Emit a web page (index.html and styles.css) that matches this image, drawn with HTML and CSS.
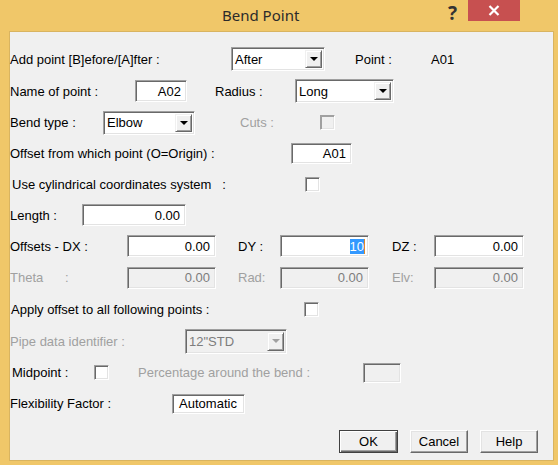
FILE: index.html
```html
<!DOCTYPE html>
<html>
<head>
<meta charset="utf-8">
<link rel="stylesheet" href="styles.css">
</head>
<body>
<div class="window">
  <div class="titlebar">
    <div class="title">Bend Point</div>
    <div class="help-q">?</div>
    <div class="close">
      <svg width="12" height="11" viewBox="0 0 12 11"><path d="M1.5 1 L10.5 10 M10.5 1 L1.5 10" stroke="#fff" stroke-width="2.2" fill="none"/></svg>
    </div>
  </div>
  <div class="client">
    <div class="row r1">
      <span class="lbl w221">Add point [B]efore/[A]fter :</span>
      <div class="combo w94"><span class="ctext">After</span><span class="dbtn"><i class="tri"></i></span></div>
      <span class="lbl ml30 w76">Point :</span>
      <span class="lbl">A01</span>
    </div>
    <div class="row r2">
      <span class="lbl w125">Name of point :</span>
      <div class="edit w52 h22 right">A02</div>
      <span class="lbl ml28 w80">Radius :</span>
      <div class="combo w99"><span class="ctext">Long</span><span class="dbtn"><i class="tri"></i></span></div>
    </div>
    <div class="row r3">
      <span class="lbl w93">Bend type :</span>
      <div class="combo w92"><span class="ctext">Elbow</span><span class="dbtn"><i class="tri"></i></span></div>
      <span class="lbl dis ml45 w80">Cuts :</span>
      <div class="check disabled"></div>
    </div>
    <div class="row r4">
      <span class="lbl w281">Offset from which point (O=Origin) :</span>
      <div class="edit w61 h21 right">A01</div>
    </div>
    <div class="row r5">
      <span class="lbl w295 pl2">Use cylindrical coordinates system &nbsp;&nbsp;:</span>
      <div class="check"></div>
    </div>
    <div class="row r6">
      <span class="lbl w72">Length :</span>
      <div class="edit w104 right">0.00</div>
    </div>
    <div class="row r7">
      <span class="lbl w117">Offsets - DX :</span>
      <div class="edit w89 right">0.00</div>
      <span class="lbl ml22 w42">DY :</span>
      <div class="edit w89 right"><span class="sel">10</span><span class="caret"></span></div>
      <span class="lbl ml23 w42">DZ :</span>
      <div class="edit w90 right">0.00</div>
    </div>
    <div class="row r8">
      <span class="lbl dis w117">Theta &nbsp;&nbsp;&nbsp;&nbsp;&nbsp;:</span>
      <div class="edit disabled w89 right">0.00</div>
      <span class="lbl dis ml22 w42">Rad:</span>
      <div class="edit disabled w89 right">0.00</div>
      <span class="lbl dis ml23 w42">Elv:</span>
      <div class="edit disabled w90 right">0.00</div>
    </div>
    <div class="row r9">
      <span class="lbl w294 pl1">Apply offset to all following points :</span>
      <div class="check"></div>
    </div>
    <div class="row r10">
      <span class="lbl dis w175">Pipe data identifier :</span>
      <div class="combo disabled w102 h25"><span class="ctext">12"STD</span><span class="dbtn"><i class="tri"></i></span></div>
    </div>
    <div class="row r11">
      <span class="lbl w84 pl2">Midpoint :</span>
      <div class="check"></div>
      <span class="lbl dis ml29 w225">Percentage around the bend :</span>
      <div class="edit disabled w38 h20"></div>
    </div>
    <div class="row r12">
      <span class="lbl w162">Flexibility Factor :</span>
      <div class="edit w73 h20 center">Automatic</div>
    </div>
    <div class="buttons">
      <div class="btn default">OK</div>
      <div class="btn">Cancel</div>
      <div class="btn">Help</div>
    </div>
  </div>
</div>
</body>
</html>
```
FILE: styles.css
```css
html, body {
  margin: 0;
  padding: 0;
  background: #f0c769;
}
.window {
  width: 558px;
  height: 465px;
  background: #f0c769;
  box-sizing: border-box;
  padding: 0 4px 4px 9px;
  display: flex;
  flex-direction: column;
  font-family: "Liberation Sans", Arial, sans-serif;
  font-size: 13px;
  color: #000;
}
.titlebar {
  height: 31px;
  position: relative;
  flex: none;
}
.title {
  position: absolute;
  left: 213px;
  top: 5px;
  font-family: "Noto Sans", "Open Sans", sans-serif;
  font-size: 15px;
  color: #2b2b2b;
}
.help-q {
  position: absolute;
  left: 439px;
  top: 0px;
  font-family: "Noto Sans", sans-serif;
  font-weight: bold;
  font-size: 19px;
  color: #333;
}
.close {
  position: absolute;
  left: 459px;
  top: 0;
  width: 52px;
  height: 21px;
  background: #c75050;
  display: flex;
  align-items: center;
  justify-content: center;
}
.close svg { display: block; }
.client {
  flex: 1;
  background: #f0f0f0;
  border: 1px solid #d9b460;
  padding-top: 11px;
  display: flex;
  flex-direction: column;
}
.row {
  display: flex;
  align-items: center;
  flex: none;
  height: 31px;
}
.r1 { height: 32px; }
.r2 { height: 32px; }
.r3 { height: 31px; }
.r4 { height: 31px; }
.r5 { height: 31px; }
.r6 { height: 30px; }
.r7 { height: 32px; }
.r8 { height: 31px; }
.r9 { height: 32px; }
.r10 { height: 32px; }
.r11 { height: 31px; }
.r12 { height: 31px; }
.lbl { flex: none; white-space: nowrap; }
.dis { color: #a0a0a0; }
.pl1 { padding-left: 1px; box-sizing: border-box; }
.pl2 { padding-left: 2px; box-sizing: border-box; }
.w38 { width: 38px; }
.w42 { width: 42px; }
.w52 { width: 52px; }
.w61 { width: 61px; }
.w72 { width: 72px; }
.w73 { width: 73px; }
.w76 { width: 76px; }
.w80 { width: 80px; }
.w84 { width: 84px; }
.w89 { width: 89px; }
.w90 { width: 90px; }
.w92 { width: 92px; }
.w93 { width: 93px; }
.w94 { width: 94px; }
.w99 { width: 99px; }
.w102 { width: 102px; }
.w104 { width: 104px; }
.w117 { width: 117px; }
.w125 { width: 125px; }
.w162 { width: 162px; }
.w175 { width: 175px; }
.w221 { width: 221px; }
.w225 { width: 225px; }
.w281 { width: 281px; }
.w294 { width: 294px; }
.w295 { width: 295px; }
.ml22 { margin-left: 22px; }
.ml23 { margin-left: 23px; }
.ml28 { margin-left: 28px; }
.ml29 { margin-left: 29px; }
.ml30 { margin-left: 30px; }
.ml45 { margin-left: 45px; }
.h20 { height: 20px !important; }
.h21 { height: 21px !important; }
.h22 { height: 22px !important; }
.h25 { height: 25px !important; }

.edit {
  flex: none;
  box-sizing: border-box;
  height: 22px;
  background: #fff;
  border: 1px solid;
  border-color: #a0a0a0 #fff #fff #a0a0a0;
  box-shadow: inset 1px 1px 0 #696969, inset -1px -1px 0 #e3e3e3;
  display: flex;
  align-items: center;
  padding: 0 5px 0 4px;
  white-space: nowrap;
}
.edit.right { justify-content: flex-end; }
.edit.center { justify-content: center; }
.edit.disabled { background: #f0f0f0; color: #7d7d7d; }
.sel {
  background: #3399ff;
  color: #fff;
  line-height: 15px;
}
.caret {
  display: inline-block;
  width: 1px;
  height: 15px;
  background: #e08a2a;
  margin-right: -2px;
}
.combo {
  flex: none;
  box-sizing: border-box;
  height: 24px;
  background: #fff;
  border: 1px solid;
  border-color: #a0a0a0 #fff #fff #a0a0a0;
  box-shadow: inset 1px 1px 0 #696969, inset -1px -1px 0 #e3e3e3;
  display: flex;
  align-items: stretch;
  padding: 2px 2px 2px 2px;
}
.combo.disabled { background: #f0f0f0; color: #7d7d7d; }
.ctext {
  flex: 1;
  display: flex;
  align-items: center;
  padding-left: 1px;
}
.dbtn {
  width: 17px;
  box-sizing: border-box;
  background: #f0f0f0;
  border: 1px solid;
  border-color: #f0f0f0 #696969 #696969 #f0f0f0;
  box-shadow: inset 1px 1px 0 #fff, inset -1px -1px 0 #a0a0a0;
  display: flex;
  align-items: center;
  justify-content: center;
}
.tri {
  width: 0;
  height: 0;
  border-left: 4px solid transparent;
  border-right: 4px solid transparent;
  border-top: 4px solid #000;
}
.combo.disabled .tri { border-top-color: #a0a0a0; }
.check {
  flex: none;
  width: 15px;
  height: 15px;
  box-sizing: border-box;
  background: #fff;
  border: 1px solid;
  border-color: #a0a0a0 #fff #fff #a0a0a0;
  box-shadow: inset 1px 1px 0 #696969, inset -1px -1px 0 #e3e3e3;
}
.check.disabled {
  background: #f0f0f0;
  box-shadow: inset 1px 1px 0 #a0a0a0, inset -1px -1px 0 #e3e3e3;
}
.buttons {
  display: flex;
  justify-content: flex-end;
  padding-right: 15px;
  margin-top: 11px;
  gap: 0;
}
.btn {
  box-sizing: border-box;
  width: 58px;
  height: 23px;
  border: 1px solid;
  border-color: #fff #696969 #696969 #fff;
  box-shadow: inset -1px -1px 0 #a0a0a0, inset 1px 1px 0 #e3e3e3;
  background: #f0f0f0;
  display: flex;
  align-items: center;
  justify-content: center;
  margin-left: 12px;
}
.btn.default {
  width: 59px;
  border-color: #404040;
  box-shadow: inset 1px 1px 0 #fff, inset -1px -1px 0 #696969, inset -2px -2px 0 #a0a0a0;
}
```
